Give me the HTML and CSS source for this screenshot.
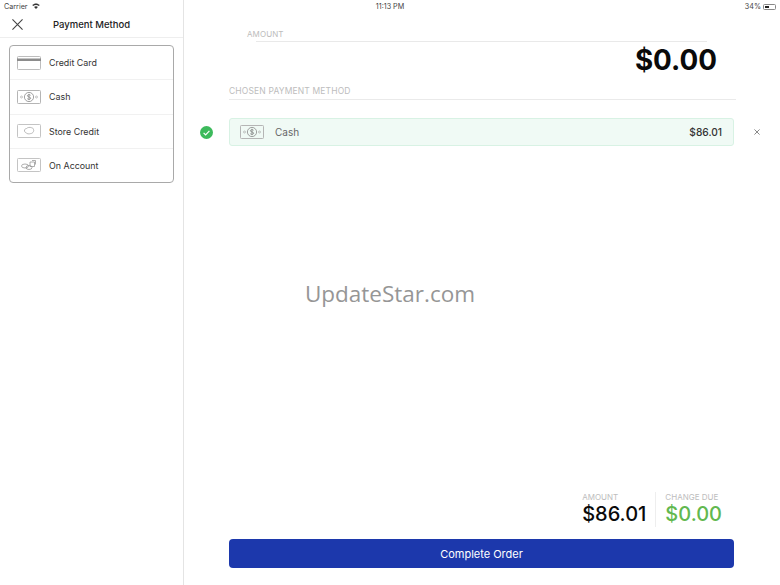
FILE: index.html
```html
<!DOCTYPE html>
<html lang="en">
<head>
<meta charset="utf-8">
<title>Payment Method</title>
<link rel="stylesheet" href="styles.css">
</head>
<body>
<svg class="defs" width="0" height="0" aria-hidden="true">
  <defs>
    <symbol id="cash" viewBox="0 0 24 14">
      <rect x=".5" y=".5" width="23" height="13" rx=".8" fill="none" stroke="#b5b5b5"/>
      <circle cx="12" cy="7" r="4.600" fill="none" stroke="#8a8a8a" stroke-width=".8"/>
      <path d="M13.600 5.300c-.4-.7-3.200-1-3.200.5 0 1.600 3.300.8 3.300 2.400 0 1.500-3 1.300-3.500.4M12 3.800v6.400" fill="none" stroke="#777" stroke-width=".7"/>
      <circle cx="4.500" cy="7" r="1" fill="none" stroke="#aaa" stroke-width=".7"/>
      <circle cx="19.500" cy="7" r="1" fill="none" stroke="#aaa" stroke-width=".7"/>
    </symbol>
  </defs>
</svg>
<div class="statusbar">
  <div class="status-left">
    <span>Carrier</span>
    <svg class="wifi" viewBox="0 0 10 8"><path d="M0 2.800C2.800 0 7.200 0 10 2.800L8.800 4C6.600 2 3.400 2 1.200 4zM2.400 5.200c1.500-1.300 3.700-1.300 5.200 0L5 8z" fill="#333"/></svg>
  </div>
  <span class="time">11:13 PM</span>
  <div class="status-right">34%<span class="battery"><span class="battery-level"></span></span></div>
</div>
<div class="app">
  <aside class="side">
    <header class="side-head">
      <svg class="close" viewBox="0 0 12 12"><path d="M.5.500l11 11M11.500.500l-11 11" stroke="#444" stroke-width="1.200" fill="none"/></svg>
      <h1>Payment Method</h1>
    </header>
    <ul class="methods">
      <li>
        <svg class="mi" viewBox="0 0 24 14"><rect x=".5" y=".5" width="23" height="13" rx=".8" fill="none" stroke="#bdbdbd"/><rect x="0" y="2.500" width="24" height="2.500" fill="#8c8c8c"/></svg>
        Credit Card
      </li>
      <li><svg class="mi"><use href="#cash"/></svg>Cash</li>
      <li>
        <svg class="mi" viewBox="0 0 24 14"><rect x=".5" y=".5" width="23" height="13" rx=".8" fill="none" stroke="#c4c4c4"/><path d="M7.500 6c.3-1 1.200-1.300 2-1.500.8-1 3.500-1.500 5-.8 1 .2 2 .8 2 1.800.4.800.3 1.800-.3 2.400-.3 1-1.500 1.600-2.700 1.700-1.500.5-3.300.3-4.200-.6-1.200-.4-2-1.500-1.800-3z" fill="none" stroke="#a8a8a8" stroke-width=".8"/></svg>
        Store Credit
      </li>
      <li>
        <svg class="mi" viewBox="0 0 24 14"><rect x=".5" y=".5" width="23" height="13" rx=".8" fill="none" stroke="#c4c4c4"/><ellipse cx="8" cy="8" rx="3.500" ry="2" fill="none" stroke="#999" stroke-width=".8"/><ellipse cx="12" cy="9.500" rx="3" ry="2" fill="none" stroke="#999" stroke-width=".8"/><path d="M13 4h4.500v4.500H13zM15 2.500h3.500v4" fill="none" stroke="#999" stroke-width=".8"/></svg>
        On Account
      </li>
    </ul>
  </aside>
  <main class="main">
    <section class="amount">
      <div class="amount-label">AMOUNT</div>
      <div class="amount-rule"></div>
      <div class="amount-value">$0.00</div>
    </section>
    <section class="chosen">
      <div class="chosen-label">CHOSEN PAYMENT METHOD</div>
      <div class="pay-row">
        <svg class="check" viewBox="0 0 13 13"><circle cx="6.500" cy="6.500" r="6.500" fill="#3dba5c"/><path d="M3.600 6.800l2 2 3.800-4" fill="none" stroke="#fff" stroke-width="1.200"/></svg>
        <div class="pay-card">
          <svg class="pi"><use href="#cash"/></svg>
          <span class="pay-name">Cash</span>
          <span class="pay-amt">$86.01</span>
        </div>
        <svg class="remove" viewBox="0 0 7 7"><path d="M.5.500l6 6M6.500.500l-6 6" stroke="#666" stroke-width=".9" fill="none"/></svg>
      </div>
    </section>
    <section class="totals">
      <div class="total">
        <div class="total-label">AMOUNT</div>
        <div class="total-value">$86.01</div>
      </div>
      <div class="total total-change">
        <div class="total-label">CHANGE DUE</div>
        <div class="total-value green">$0.00</div>
      </div>
    </section>
    <button class="complete" type="button">Complete Order</button>
  </main>
</div>
<div class="watermark">UpdateStar.com</div>
</body>
</html>
```
FILE: styles.css
```css
* { box-sizing: border-box; }
html, body { margin: 0; height: 100%; }
body { width: 780px; height: 585px; overflow: hidden; background: #fff; font-family: Inter, "Liberation Sans", sans-serif; color: #333; position: relative; }
.defs { position: absolute; }
.statusbar { position: absolute; left: 0; top: 1px; width: 780px; height: 12px; padding: 0 4px; display: grid; grid-template-columns: 1fr auto 1fr; align-items: center; font-size: 7.200px; line-height: 12px; color: #444; }
.status-left { display: flex; align-items: center; gap: 4px; }
.status-right { display: flex; align-items: center; justify-content: flex-end; gap: 2px; }
.wifi { width: 8px; height: 6px; margin-bottom: 2px; }
.battery { width: 13px; height: 6px; border: 1px solid #888; border-radius: 1.500px; padding: 1px; display: block; }
.battery-level { display: block; width: 4px; height: 100%; background: #222; }
.app { display: flex; height: 585px; }
.side { width: 184px; flex: none; border-right: 1px solid #e4e4e4; padding-top: 12px; }
.side-head { height: 26px; display: flex; align-items: center; border-bottom: 1px solid #eee; position: relative; justify-content: center; }
.side-head h1 { margin: 0; font-size: 9.500px; font-weight: 500; color: #222; }
.close { position: absolute; left: 12px; top: 7px; width: 11px; height: 11px; }
.methods { list-style: none; margin: 7px 9px 0; padding: 0; border: 1px solid #a9a9a9; border-radius: 4px; height: 138px; display: flex; flex-direction: column; }
.methods li { flex: 1; display: flex; align-items: center; font-size: 8.900px; color: #333; padding-left: 7px; gap: 8px; border-bottom: 1px solid #f1f1f1; }
.methods li:last-child { border-bottom: 0; }
.mi { width: 24px; height: 14px; }
.main { flex: 1; display: flex; flex-direction: column; padding-right: 46px; padding-top: 12px; }
.amount { margin-left: 63px; margin-right: 29px; margin-top: 17px; position: relative; height: 57px; }
.amount-label { font-size: 8px; color: #bcbcbc; line-height: 11px; letter-spacing: .1px; }
.amount-rule { height: 1px; margin: 1px 0 0 9px; background: #e9e9e9; }
.amount-value { position: absolute; right: -10px; top: 14px; font-size: 27.800px; font-weight: 700; line-height: 34px; color: #0a0a0a; }
.chosen { margin-left: 45px; flex: 1; }
.chosen-label { font-size: 8.500px; color: #bdbdbd; line-height: 11px; height: 14px; letter-spacing: .15px; border-bottom: 1px solid #eaeaea; width: 507px; }
.pay-row { display: flex; align-items: center; margin-top: 18px; margin-left: -28px; margin-right: -38px; gap: 16px; }
.check { width: 13px; height: 13px; flex: none; margin-left: -1px; }
.pay-card { width: 505px; height: 28px; flex: none; background: #f0faf5; border: 1px solid #d8f2e4; border-radius: 3px; display: flex; align-items: center; padding: 0 11px 0 10px; }
.pi { width: 24px; height: 14px; margin-right: 11px; }
.pay-name { font-size: 10px; color: #666; flex: 1; }
.pay-amt { font-size: 10.200px; font-weight: 500; color: #333; }
.remove { width: 6px; height: 6px; flex: none; margin-left: 4px; }
.totals { display: flex; justify-content: flex-end; margin-right: 14px; padding-bottom: 12px; }
.total { padding-right: 9px; }
.total-change { border-left: 1px solid #eee; padding-left: 9px; padding-right: 0; }
.total-label { font-size: 8px; color: #bdbdbd; line-height: 10px; }
.total-value { font-size: 20px; font-weight: 500; line-height: 25px; color: #0a0a0a; }
.green { color: #62b84f; }
.complete { margin: 0 0 17px 45px; width: 505px; height: 29px; border: 0; border-radius: 4px; background: #1c38ac; color: #fff; font: 400 11px Inter, "Liberation Sans", sans-serif; }
.watermark { position: absolute; left: 0; width: 780px; top: 279px; text-align: center; font-family: "Open Sans", sans-serif; font-size: 22.500px; line-height: 30px; color: #969696; }
```
